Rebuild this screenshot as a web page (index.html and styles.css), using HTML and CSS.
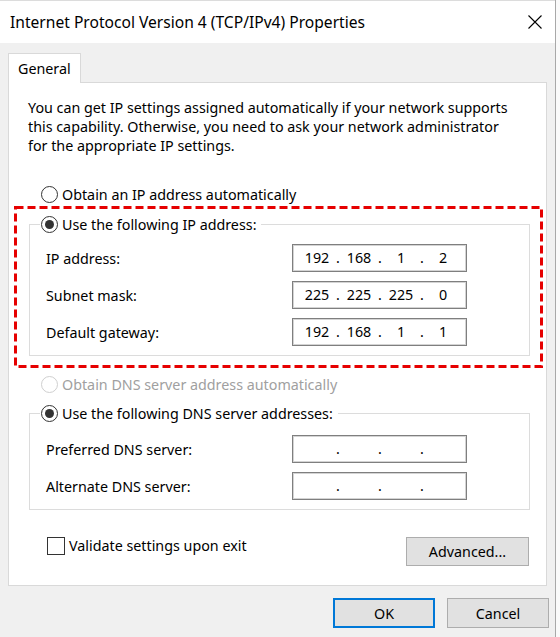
FILE: index.html
```html
<!DOCTYPE html>
<html lang="en">
<head>
  <meta charset="UTF-8">
  <title>Internet Protocol Version 4 (TCP/IPv4) Properties</title>
  <link rel="stylesheet" href="styles.css">
</head>
<body>
  <div class="ventana">
    <div class="barra-titulo">
      <span class="titulo">Internet Protocol Version 4 (TCP/IPv4) Properties</span>
      <svg class="cerrar" width="14" height="14" viewBox="0 0 14 14">
        <path d="M0.5 0.5 L13.5 13.5 M13.5 0.5 L0.5 13.5" stroke="#000" stroke-width="1.1" fill="none"/>
      </svg>
    </div>

    <div class="cliente">
      <div class="pestanas">
        <div class="pestana">General</div>
      </div>

      <div class="panel">
        <p class="intro">You can get IP settings assigned automatically if your network supports<br>this capability. Otherwise, you need to ask your network administrator<br>for the appropriate IP settings.</p>

        <div class="opcion primera"><span class="radio"></span>Obtain an IP address automatically</div>

        <fieldset class="grupo grupo-ip">
          <legend><span class="opcion"><span class="radio marcado"></span>Use the following IP address:</span></legend>
          <div class="fila">
            <span>IP address:</span>
            <div class="caja-ip"><span class="seg">192</span><span class="punto">.</span><span class="seg">168</span><span class="punto">.</span><span class="seg">1</span><span class="punto">.</span><span class="seg">2</span></div>
          </div>
          <div class="fila">
            <span>Subnet mask:</span>
            <div class="caja-ip"><span class="seg">225</span><span class="punto">.</span><span class="seg">225</span><span class="punto">.</span><span class="seg">225</span><span class="punto">.</span><span class="seg">0</span></div>
          </div>
          <div class="fila">
            <span>Default gateway:</span>
            <div class="caja-ip"><span class="seg">192</span><span class="punto">.</span><span class="seg">168</span><span class="punto">.</span><span class="seg">1</span><span class="punto">.</span><span class="seg">1</span></div>
          </div>
        </fieldset>

        <div class="opcion desactivado"><span class="radio"></span>Obtain DNS server address automatically</div>

        <fieldset class="grupo grupo-dns">
          <legend><span class="opcion"><span class="radio marcado"></span>Use the following DNS server addresses:</span></legend>
          <div class="fila">
            <span>Preferred DNS server:</span>
            <div class="caja-ip"><span class="seg"></span><span class="punto">.</span><span class="seg"></span><span class="punto">.</span><span class="seg"></span><span class="punto">.</span><span class="seg"></span></div>
          </div>
          <div class="fila">
            <span>Alternate DNS server:</span>
            <div class="caja-ip"><span class="seg"></span><span class="punto">.</span><span class="seg"></span><span class="punto">.</span><span class="seg"></span><span class="punto">.</span><span class="seg"></span></div>
          </div>
        </fieldset>

        <div class="pie-panel">
          <div class="validar"><span class="casilla"></span>Validate settings upon exit</div>
          <button class="boton boton-avanzado">Advanced...</button>
        </div>

        <!-- marco rojo de resaltado -->
        <svg class="resaltado" width="529" height="162" viewBox="0 0 529 162">
          <rect x="1.5" y="1.5" width="526" height="159" fill="none" stroke="#e60000" stroke-width="3" stroke-dasharray="8 4"/>
        </svg>
      </div>

      <div class="acciones">
        <button class="boton boton-ok">OK</button>
        <button class="boton">Cancel</button>
      </div>
    </div>
  </div>
</body>
</html>
```

FILE: styles.css
```css
body {
  margin: 0;
  background-color: #fafafa;
  font-family: "Noto Sans", "Open Sans", sans-serif;
  font-size: 14.3px;
  color: #000;
}

.ventana {
  width: 556px;
  height: 637px;
  box-sizing: border-box;
  border-right: 1px solid #a8a8a8;
  display: flex;
  flex-direction: column;
  background-color: #f0f0f0;
}

.barra-titulo {
  height: 43px;
  box-sizing: border-box;
  border-top: 1px solid #dcdcdc;
  background-color: #fff;
  display: flex;
  align-items: center;
  justify-content: space-between;
  padding: 0 13px 1px 10px;
}

.titulo {
  font-size: 15.6px;
}

.cliente {
  flex: 1;
  padding: 10px 6px 0 8px;
}

.pestanas {
  display: flex;
}

.pestana {
  width: 73px;
  height: 30px;
  box-sizing: border-box;
  border: 1px solid #d9d9d9;
  border-bottom: none;
  background-color: #fff;
  margin-bottom: -1px;
  position: relative;
  z-index: 1;
  padding-left: 9px;
  display: flex;
  align-items: center;
  padding-bottom: 1px;
}

.panel {
  position: relative;
  width: 539px;
  height: 504px;
  box-sizing: border-box;
  border: 1px solid #d9d9d9;
  background-color: #fff;
  padding: 15px 16px 0 19px;
}

.intro {
  margin: 0;
  line-height: 19px;
  white-space: nowrap;
}

.opcion {
  display: flex;
  align-items: center;
  height: 19px;
  gap: 4px;
  white-space: nowrap;
}

.primera {
  margin: 30px 0 0 13px;
}

.radio {
  width: 17px;
  height: 17px;
  box-sizing: border-box;
  border: 1px solid #333;
  border-radius: 50%;
  display: flex;
  align-items: center;
  justify-content: center;
  flex-shrink: 0;
}

.radio.marcado::after {
  content: "";
  width: 9px;
  height: 9px;
  border-radius: 50%;
  background-color: #333;
}

.desactivado {
  margin: 19px 0 0 13px;
  color: #a0a0a0;
}

.desactivado .radio {
  border-color: #cfcfcf;
}

.grupo {
  margin: 10px 0 0 1px;
  width: 501px;
  box-sizing: border-box;
  border: 1px solid #dcdcdc;
  padding: 10px 0 9px 16px;
  display: flex;
  flex-direction: column;
  gap: 9px;
}

.grupo-ip {
  margin-top: 11px;
}

.grupo-dns {
  padding-top: 12px;
}

.grupo legend {
  margin-left: -6px;
  padding: 0 5px 0 1px;
}

.fila {
  display: grid;
  grid-template-columns: 246px 175px;
  align-items: center;
  white-space: nowrap;
}

.caja-ip {
  height: 28px;
  box-sizing: border-box;
  border: 1px solid #7f7f7f;
  box-shadow: inset 0 0 0 1px #d4d4d4;
  padding-left: 3px;
  display: flex;
  align-items: center;
  padding-bottom: 1px;
}

.seg {
  width: 42px;
  text-align: center;
}

.punto {
  width: 0;
  display: flex;
  justify-content: center;
}

.pie-panel {
  margin-top: 26px;
  display: flex;
  justify-content: space-between;
  align-items: flex-start;
}

.validar {
  margin-left: 19px;
  display: flex;
  align-items: center;
  gap: 4px;
  height: 19px;
}

.casilla {
  width: 18px;
  height: 18px;
  box-sizing: border-box;
  border: 1px solid #333;
}

.boton {
  font-family: inherit;
  font-size: 14.3px;
  color: #000;
  background-color: #e1e1e1;
  border: 1px solid #adadad;
  border-radius: 0;
  padding: 0;
  height: 30px;
  width: 102px;
}

.boton-avanzado {
  width: 123px;
  height: 29px;
  margin: 1px 1px 0 0;
}

.boton-ok {
  border: 2px solid #0078d7;
}

.acciones {
  margin-top: 12px;
  display: flex;
  justify-content: flex-end;
  gap: 12px;
}

.resaltado {
  position: absolute;
  left: 5px;
  top: 123px;
}
```
